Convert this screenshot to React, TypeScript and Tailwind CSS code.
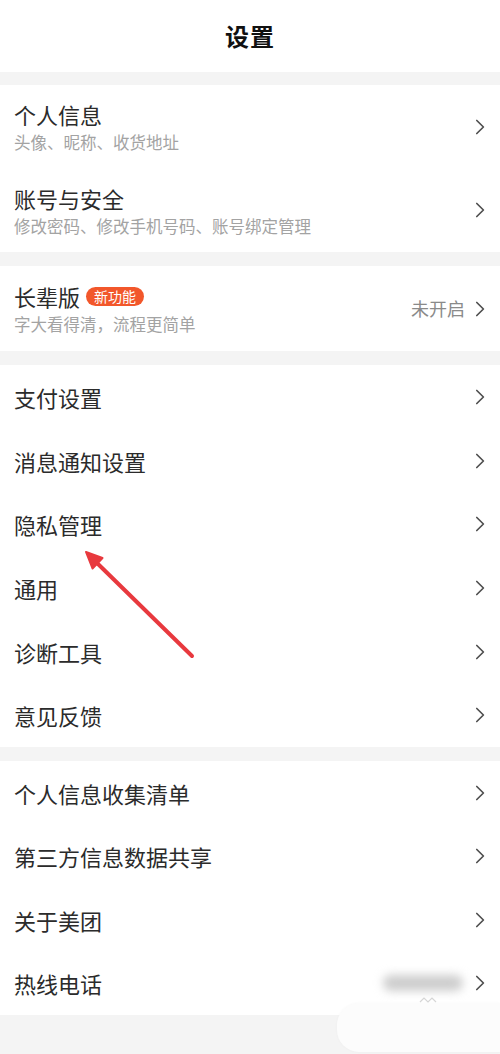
import React from 'react';

type Row = {
  title: string;
  sub?: string;
  badge?: string;
  value?: string;
  blurred?: boolean;
};

const sections: { rows: Row[]; rowH: string }[] = [
  {
    rowH: 'h-[83.5px]',
    rows: [
      { title: '个人信息', sub: '头像、昵称、收货地址' },
      { title: '账号与安全', sub: '修改密码、修改手机号码、账号绑定管理' },
    ],
  },
  {
    rowH: 'h-[85px]',
    rows: [{ title: '长辈版', sub: '字大看得清，流程更简单', badge: '新功能', value: '未开启' }],
  },
  {
    rowH: 'h-[63.7px]',
    rows: [
      { title: '支付设置' },
      { title: '消息通知设置' },
      { title: '隐私管理' },
      { title: '通用' },
      { title: '诊断工具' },
      { title: '意见反馈' },
    ],
  },
  {
    rowH: 'h-[63.4px]',
    rows: [
      { title: '个人信息收集清单' },
      { title: '第三方信息数据共享' },
      { title: '关于美团' },
      { title: '热线电话', blurred: true },
    ],
  },
];

const Chevron = () => (
  <svg width="10" height="16" viewBox="0 0 10 16" fill="none" className="shrink-0">
    <path d="M1.8 1.5 L8.4 8 L1.8 14.5" stroke="#4f4f4f" strokeWidth="1.7" strokeLinecap="round" strokeLinejoin="round" />
  </svg>
);

const SettingRow = ({ row, rowH }: { row: Row; rowH: string }) => (
  <div className={`${rowH} flex items-center pl-[14px] pr-[15px]`}>
    <div className="flex-1 min-w-0">
      <div className="flex items-center">
        <span className="text-[22px] leading-[28px] text-[#2b2b2b]">{row.title}</span>
        {row.badge && (
          <span className="ml-[6px] h-[19px] px-[8px] rounded-full bg-[#f2572b] text-white text-[14px] leading-[19px] flex items-center">
            {row.badge}
          </span>
        )}
      </div>
      {row.sub && <div className="text-[16.5px] leading-[22px] mt-[3px] text-[#a3a3a3]">{row.sub}</div>}
    </div>
    {row.value && <span className="text-[18px] text-[#8a8a8a] mr-[10px]">{row.value}</span>}
    {row.blurred && <span className="w-[80px] h-[16px] rounded-full bg-[#cdcdcd] blur-[5px] mr-[12px]" />}
    <Chevron />
  </div>
);

export default function App() {
  return (
    <div
      className="relative w-[500px] h-[1054px] overflow-hidden bg-[#f4f4f4]"
      style={{ fontFamily: '"Noto Sans CJK SC", "Noto Sans", sans-serif' }}
    >
      <div className="h-[72px] bg-white flex items-center justify-center">
        <h1 className="text-[24px] font-bold text-[#111] tracking-[1px]">设置</h1>
      </div>

      <div className="flex flex-col gap-[14px] pt-[13px]">
        {sections.map((s, i) => (
          <div key={i} className="bg-white">
            {s.rows.map((r) => (
              <SettingRow key={r.title} row={r} rowH={s.rowH} />
            ))}
          </div>
        ))}
      </div>

      {/* red annotation arrow */}
      <svg className="absolute left-0 top-0 pointer-events-none" width="500" height="1054">
        <line x1="192" y1="656" x2="97" y2="563" stroke="#e8393e" strokeWidth="4" strokeLinecap="round" />
        <polygon points="86,552 102.5,558 92.5,568.5" fill="#e8393e" stroke="#e8393e" strokeWidth="2" strokeLinejoin="round" />
      </svg>

      {/* floating panel bottom right */}
      <div className="absolute left-[337px] right-0 top-[1003px] h-[49px] rounded-l-[22px] bg-[#fcfcfc] shadow-[0_0_3px_rgba(0,0,0,0.03)]" />
      <svg className="absolute left-[419px] top-[996px]" width="18" height="8" viewBox="0 0 18 8" fill="none">
        <path d="M1 6 L5 2 L9 6 L13 2 L17 6" stroke="#d6d6d6" strokeWidth="1.2" />
      </svg>
    </div>
  );
}
